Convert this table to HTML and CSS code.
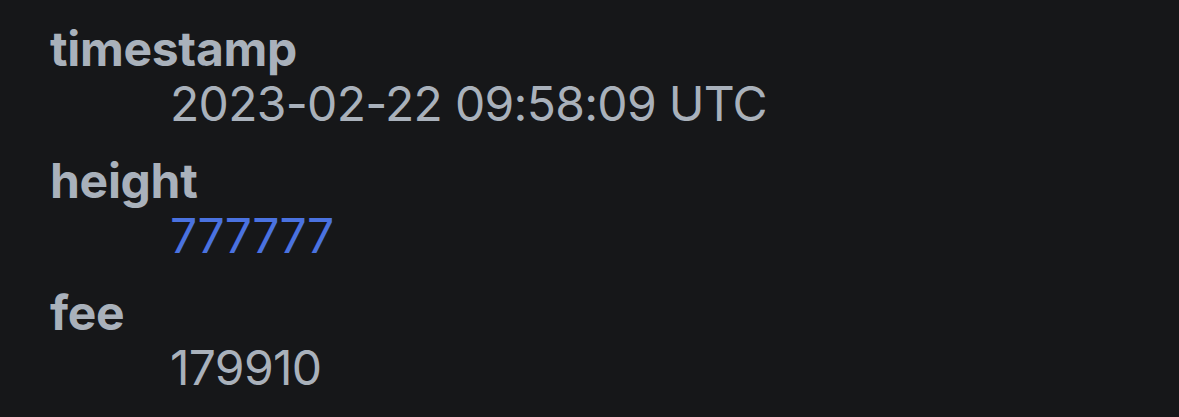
FILE: index.html
```html
<!DOCTYPE html>
<html>
<head>
<meta charset="utf-8">
<link rel="stylesheet" href="styles.css">
</head>
<body>
<dl class="details">
  <dt class="key">timestamp</dt>
  <dd class="value">2023-02-22 09:58:09 UTC</dd>
  <dt class="key">height</dt>
  <dd class="value"><a class="link" href="#">777777</a></dd>
  <dt class="key">fee</dt>
  <dd class="value">179910</dd>
</dl>
</body>
</html>
```

FILE: styles.css
```css
html, body {
  margin: 0;
  padding: 0;
  background: #161719;
}
body {
  font-family: Inter, "Liberation Sans", Arial, sans-serif;
  font-size: 48px;
  color: #a9b1bb;
  width: 1179px;
  height: 417px;
  overflow: hidden;
}
.details {
  margin: 0;
  padding: 21px 0 0 50px;
}
.key {
  font-weight: bold;
  line-height: 55px;
  letter-spacing: -0.3px;
}
.value {
  margin: 0 0 22px 120px;
  line-height: 55px;
  letter-spacing: -0.7px;
}
.link {
  color: #4a72e0;
  text-decoration: none;
}
```
